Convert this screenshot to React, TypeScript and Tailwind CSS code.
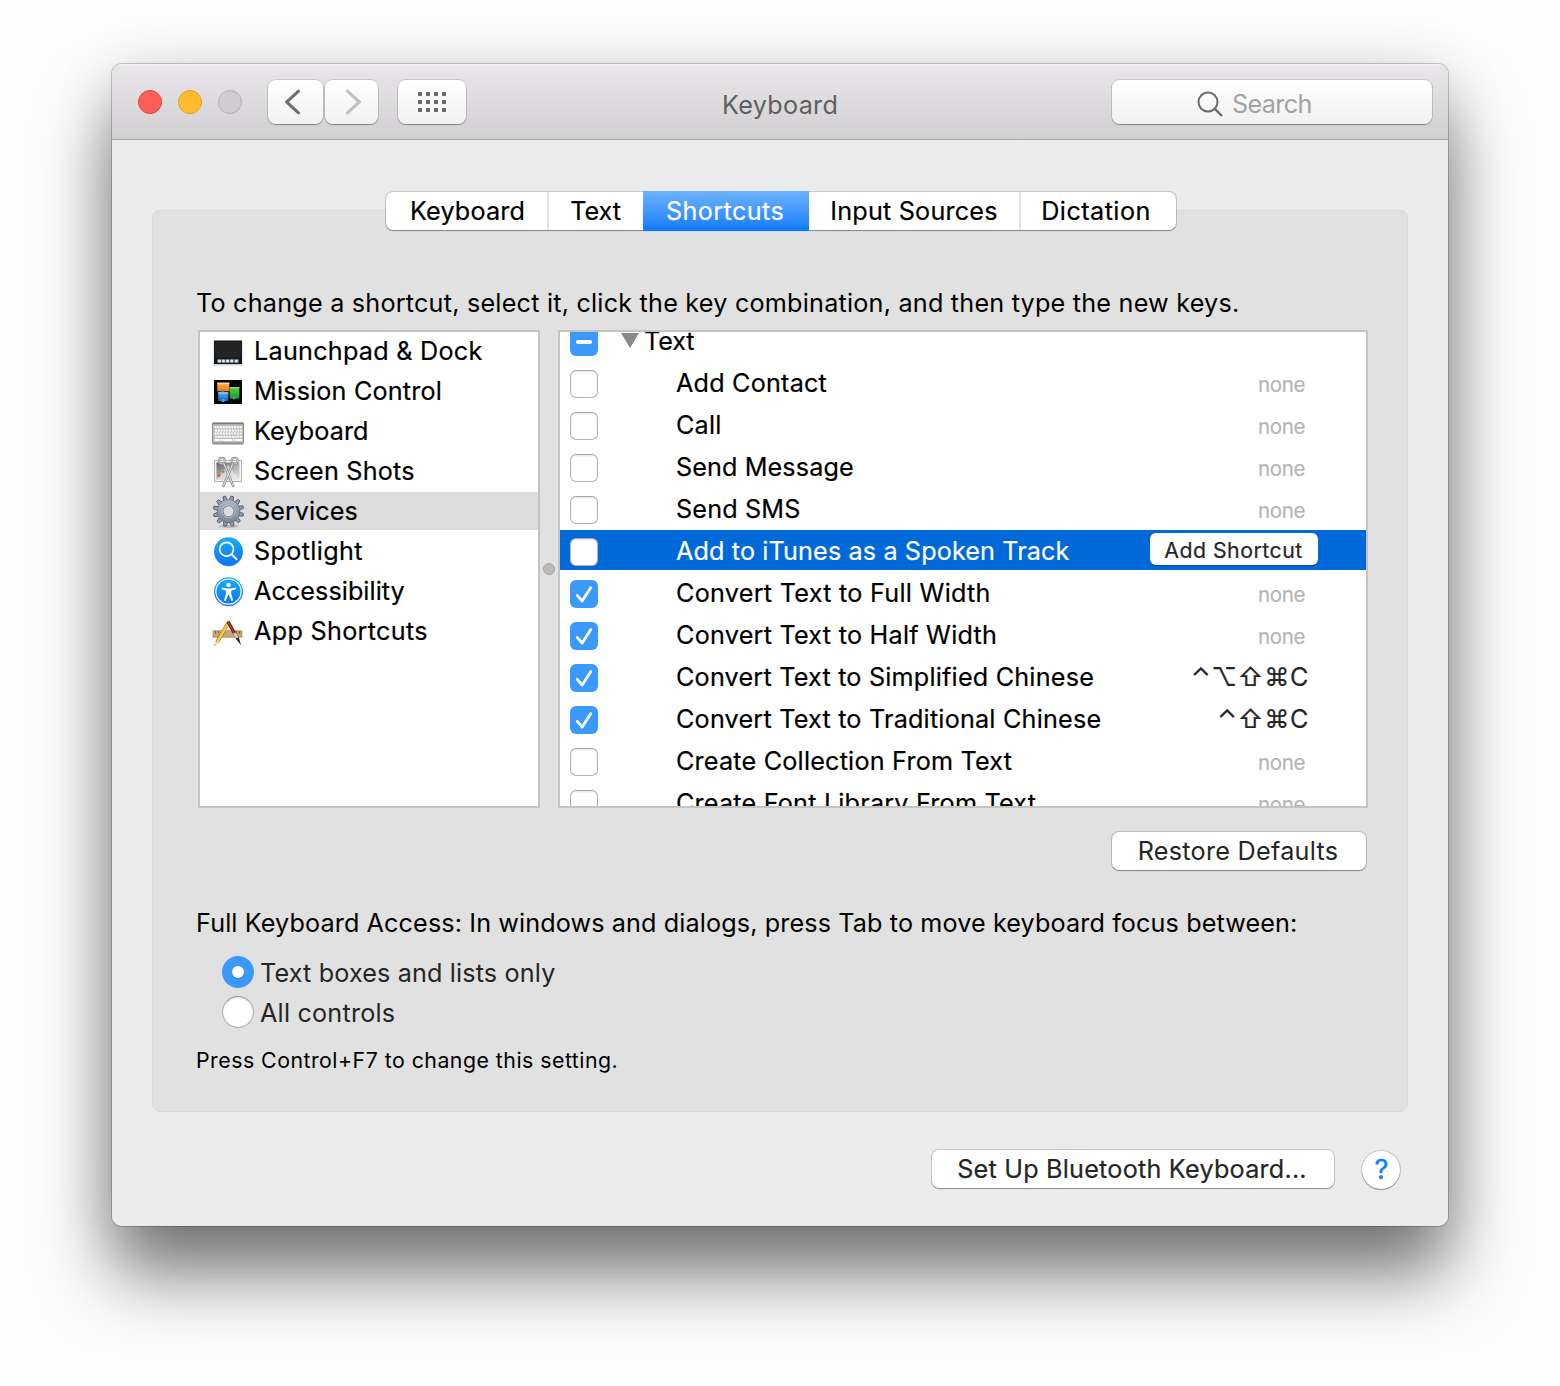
import { useState, type ReactNode } from "react";
import { clsx } from "clsx";

type CheckState = "on" | "off" | "mixed";

interface Service {
  name: string;
  state: CheckState;
  keys?: string;
  group?: boolean;
  tracking?: string;
}

const tabs = [
  { name: "Keyboard", className: "w-[161px] pl-0.5 tracking-[0.15px]" },
  { name: "Text", className: "w-[96px] pr-px tracking-[-0.05px]" },
  { name: "Shortcuts", className: "w-[166px] pr-0.5 tracking-[0.4px]" },
  { name: "Input Sources", className: "w-[210px] tracking-[0.2px]" },
  { name: "Dictation", className: "w-[157px] pr-[5px] tracking-[0.45px]" },
];

const services: Service[] = [
  { name: "Text", state: "mixed", group: true, tracking: "tracking-[-0.1px]" },
  { name: "Add Contact", state: "off" },
  { name: "Call", state: "off" },
  { name: "Send Message", state: "off", tracking: "tracking-[0.1px]" },
  { name: "Send SMS", state: "off", tracking: "tracking-[0.15px]" },
  { name: "Add to iTunes as a Spoken Track", state: "off", tracking: "tracking-[0.12px]" },
  { name: "Convert Text to Full Width", state: "on", tracking: "tracking-[0.27px]" },
  { name: "Convert Text to Half Width", state: "on", tracking: "tracking-[0.24px]" },
  { name: "Convert Text to Simplified Chinese", state: "on", keys: "⌃⌥⇧⌘C" },
  { name: "Convert Text to Traditional Chinese", state: "on", keys: "⌃⇧⌘C" },
  { name: "Create Collection From Text", state: "off" },
  { name: "Create Font Library From Text", state: "off" },
];

function IconFrame({ children }: { children: ReactNode }) {
  return (
    <svg width="36" height="38" viewBox="0 0 36 38" className="shrink-0">
      {children}
    </svg>
  );
}

function LaunchpadIcon() {
  return (
    <IconFrame>
      <rect x="3.5" y="10" width="29" height="23.5" fill="#aab2ba" opacity="0.6" />
      <rect x="4" y="8.5" width="28" height="23.5" fill="#15181b" />
      <rect x="5" y="10" width="26" height="15.5" fill="#242424" />
      <rect x="7" y="27" width="22" height="4" fill="#565e66" />
      {[9.4, 13.5, 17.6, 21.8, 26.3].map((cx) => (
        <circle key={cx} cx={cx} cy="29" r="1.6" fill="#e2eaf3" />
      ))}
    </IconFrame>
  );
}

function MissionControlIcon() {
  return (
    <IconFrame>
      <defs>
        <linearGradient id="mcOrange" x1="0" y1="0" x2="0" y2="1">
          <stop offset="0" stopColor="#ffb04a" />
          <stop offset="1" stopColor="#f07c08" />
        </linearGradient>
        <linearGradient id="mcBlue" x1="0" y1="0" x2="0" y2="1">
          <stop offset="0" stopColor="#5ab0f5" />
          <stop offset="1" stopColor="#0f62c8" />
        </linearGradient>
        <linearGradient id="mcGreen" x1="0" y1="0" x2="0" y2="1">
          <stop offset="0" stopColor="#56d04c" />
          <stop offset="1" stopColor="#1b9c1f" />
        </linearGradient>
      </defs>
      <rect x="4" y="8" width="28" height="24" fill="#060606" />
      <rect x="7.3" y="10.7" width="12" height="8.6" fill="url(#mcOrange)" />
      <rect x="7.3" y="10.7" width="12" height="1.5" fill="#f6d8ae" />
      <rect x="8.3" y="20.3" width="10" height="8.7" fill="url(#mcBlue)" />
      <rect x="8.3" y="20.3" width="10" height="1.3" fill="#a8cdec" />
      <rect x="19.7" y="15" width="9.6" height="11.5" fill="url(#mcGreen)" />
      <rect x="19.7" y="15" width="9.6" height="1.4" fill="#87dc80" />
      <circle cx="12.8" cy="18.8" r="1.3" fill="#3d9be8" />
      <circle cx="13.2" cy="28.4" r="1.7" fill="#38a5f5" />
      <circle cx="24.3" cy="26" r="1.4" fill="#3b9ee0" />
    </IconFrame>
  );
}

function KeyboardIcon() {
  return (
    <IconFrame>
      <rect x="2.5" y="12" width="31" height="20.5" rx="1" fill="#8d8d8d" />
      <rect x="2.5" y="11" width="31" height="20" rx="1" fill="#bdbdbd" stroke="#8f8f8f" />
      <rect x="2.5" y="10.7" width="31" height="1.5" fill="#777" />
      {[15.2, 18.4, 21.6, 24.8].map((y, i) => (
        <line key={y} x1={4.4 + (i % 2) * 0.6} x2="32" y1={y} y2={y} stroke="#fff" strokeWidth="2" strokeDasharray="2 0.8" />
      ))}
      <path d="M4.4 28h5M10.2 28h1.5M12.4 28h9.8M23 28h1.6M25.4 28H32" stroke="#fff" strokeWidth="2" />
    </IconFrame>
  );
}

function ScreenShotsIcon() {
  return (
    <IconFrame>
      <defs>
        <linearGradient id="shot" x1="0" y1="0" x2="1" y2="1">
          <stop offset="0" stopColor="#5e5e5e" />
          <stop offset="0.55" stopColor="#b5b5b5" />
          <stop offset="1" stopColor="#e4e4e4" />
        </linearGradient>
      </defs>
      <rect x="4.5" y="8.5" width="27" height="21" fill="#f4f4f4" stroke="#b4b4b4" />
      <rect x="6.5" y="10.5" width="23" height="17" fill="url(#shot)" />
      <path d="M6.5 27.5 18 13l11.5 14.5z" fill="#f0f0f0" opacity="0.6" />
      <path d="M8 24.5l2.4-2.2" stroke="#e0493b" strokeWidth="2" />
      <path d="M10.4 22.3l2-1.6" stroke="#efb94b" strokeWidth="1.8" />
      <path d="M12.4 20.7l2-1.6" stroke="#52a552" strokeWidth="1.6" />
      <g fill="none" strokeLinecap="round">
        <circle cx="12" cy="8.8" r="3" stroke="#8d8d8d" strokeWidth="2" />
        <circle cx="24.6" cy="8.8" r="3" stroke="#8d8d8d" strokeWidth="2" />
        <circle cx="12" cy="8.8" r="3" stroke="#d0d0d0" strokeWidth="0.9" />
        <circle cx="24.6" cy="8.8" r="3" stroke="#d0d0d0" strokeWidth="0.9" />
        <path d="M13.8 11.5 23.2 34M22.8 11.5 13.4 34" stroke="#858585" strokeWidth="2.5" />
        <path d="M13.8 11.5 23.2 34M22.8 11.5 13.4 34" stroke="#dcdcdc" strokeWidth="1.2" />
      </g>
    </IconFrame>
  );
}

function ServicesIcon() {
  return (
    <IconFrame>
      <defs>
        <linearGradient id="gear" gradientUnits="userSpaceOnUse" x1="0" y1="4" x2="0" y2="34">
          <stop offset="0" stopColor="#b4bdcb" />
          <stop offset="1" stopColor="#747f90" />
        </linearGradient>
      </defs>
      <ellipse cx="18.5" cy="34.3" rx="10" ry="1.4" fill="#8b8b8b" opacity="0.5" />
      {Array.from({ length: 12 }, (_, i) => (
        <path
          key={i}
          d="M16.2 9 17.3 3.9h2.4L20.8 9z"
          transform={`rotate(${i * 30 + 14} 18.5 19.2)`}
          fill="#929dae"
          stroke="#4d5665"
          strokeWidth="0.8"
        />
      ))}
      <circle cx="18.5" cy="19.2" r="8.3" fill="none" stroke="#4d5665" strokeWidth="6.2" />
      <circle cx="18.5" cy="19.2" r="8.4" fill="none" stroke="url(#gear)" strokeWidth="5.4" />
      <circle cx="18.5" cy="19.2" r="6.4" fill="none" stroke="#bcc4d0" strokeWidth="0.8" />
    </IconFrame>
  );
}

function BlueDisc() {
  return (
    <>
      <defs>
        <linearGradient id="disc" x1="0" y1="0" x2="0" y2="1">
          <stop offset="0" stopColor="#1badf8" />
          <stop offset="1" stopColor="#0a74f2" />
        </linearGradient>
      </defs>
      <circle cx="18.5" cy="20.3" r="14.5" fill="#000" opacity="0.18" />
      <circle cx="18.5" cy="19.6" r="14.4" fill="url(#disc)" />
    </>
  );
}

function SpotlightIcon() {
  return (
    <IconFrame>
      <BlueDisc />
      <circle cx="16.6" cy="17.3" r="6.9" fill="none" stroke="#fff" strokeWidth="1.7" />
      <path d="M21.6 22.3 26.6 27.2" stroke="#fff" strokeWidth="2" strokeLinecap="round" />
    </IconFrame>
  );
}

function AccessibilityIcon() {
  return (
    <IconFrame>
      <BlueDisc />
      <circle cx="18.5" cy="19.6" r="12.6" fill="none" stroke="#fff" strokeWidth="1.2" />
      <circle cx="18.5" cy="12.9" r="2.2" fill="#fff" />
      <path d="M11.6 15.4 16.8 16.4h3.8l5.2-1v1.9l-4.6 1.3v3.2l2 6.6-1.7.5-2.6-6.3h-.6l-2.6 6.3-1.7-.5 2-6.6v-3.2l-4.4-1.3z" fill="#fff" />
    </IconFrame>
  );
}

function AppShortcutsIcon() {
  return (
    <IconFrame>
      <rect x="3" y="18.8" width="29" height="6.4" fill="#c7a373" stroke="#a27e4e" strokeWidth="0.6" />
      <path d="M5.5 19v2.6M8.5 19v2M11.5 19v2.6M23.5 19v2.6M26.5 19v2M29.5 19v2.6" stroke="#6f5230" strokeWidth="0.8" />
      <path d="M18 11.2 7.2 30" stroke="#a86a12" strokeWidth="3.6" />
      <path d="M18 11.2 7.2 30" stroke="#f8bd3c" strokeWidth="2.6" />
      <path d="M18.7 11.2 7.9 30" stroke="#fbdc86" strokeWidth="0.8" />
      <path d="M5.6 28.8 8.8 30.8 4.3 33.8z" fill="#ead0a0" />
      <path d="M4.6 32.4 5.4 33 4.2 34z" fill="#222" />
      <path d="M17 9.6 19.8 11.2" stroke="#e8837c" strokeWidth="2.4" />
      <path d="M18 9.6 27.6 26.6" stroke="#5e1f12" strokeWidth="3.2" />
      <path d="M18 9.6 27.6 26.6" stroke="#a8402c" strokeWidth="1.5" />
      <path d="M24.4 21 27.2 26" stroke="#c9c9c9" strokeWidth="3" />
      <path d="M26 27 28.8 25.4 31.2 33.4z" fill="#2b2420" />
    </IconFrame>
  );
}

const categories = [
  { name: "Launchpad & Dock", icon: LaunchpadIcon, tracking: "tracking-[0.25px]" },
  { name: "Mission Control", icon: MissionControlIcon, tracking: "tracking-[0.16px]" },
  { name: "Keyboard", icon: KeyboardIcon, tracking: "tracking-[0.1px]" },
  { name: "Screen Shots", icon: ScreenShotsIcon },
  { name: "Services", icon: ServicesIcon, tracking: "tracking-[0.05px]" },
  { name: "Spotlight", icon: SpotlightIcon, tracking: "tracking-[0.35px]" },
  { name: "Accessibility", icon: AccessibilityIcon, tracking: "tracking-[0.05px]" },
  { name: "App Shortcuts", icon: AppShortcutsIcon, tracking: "tracking-[0.3px]" },
];

function Checkbox({ state, onClick }: { state: CheckState; onClick: () => void }) {
  return (
    <button
      onClick={onClick}
      className={clsx(
        "mt-2 flex size-7 shrink-0 items-center justify-center rounded-[6px]",
        state === "off"
          ? "border border-[#b4b4b4] border-t-[#a6a6a6] bg-white shadow-[inset_0_1px_2px_rgba(0,0,0,0.12)]"
          : "bg-[#3b99fc]"
      )}
    >
      {state === "on" && (
        <svg width="28" height="28" viewBox="0 0 28 28" fill="none" stroke="#fff" strokeWidth="2.8" strokeLinecap="round" strokeLinejoin="round">
          <path d="M7.2 15.4 12.2 21 20.8 7.6" />
        </svg>
      )}
      {state === "mixed" && <span className="h-[3.5px] w-4 rounded-full bg-white" />}
    </button>
  );
}

function Radio({ checked, label, className, onClick }: { checked: boolean; label: string; className: string; onClick: () => void }) {
  return (
    <button onClick={onClick} className={clsx("flex h-10 items-center gap-1.5 text-[#262626]", className)}>
      <span
        className={clsx(
          "-mt-0.5 flex size-8 items-center justify-center rounded-full",
          checked ? "bg-[#3b99fc]" : "border border-[#b0b0b0] border-t-[#979797] bg-white shadow-[inset_0_1px_2px_rgba(0,0,0,0.15)]"
        )}
      >
        {checked && <span className="size-3 rounded-full bg-white shadow-[0_1px_1px_rgba(0,0,0,0.2)]" />}
      </span>
      {label}
    </button>
  );
}

const toolbarButton =
  "flex h-11 items-center justify-center rounded-[8px] bg-linear-to-b from-white to-[#f1f1f1] shadow-[0_0_0_1px_rgba(0,0,0,0.12),0_1px_1px_rgba(0,0,0,0.3)]";
const pushButton =
  "rounded-[7px] bg-white text-[#262626] shadow-[0_0_0_1px_rgba(0,0,0,0.15),0_1px_1px_rgba(0,0,0,0.3)]";

function TitleBar() {
  return (
    <header className="flex h-[76px] items-center border-b border-[#a9a6a9] bg-linear-to-b from-[#e9e7e9] to-[#d1cfd1] pt-px pr-4 pl-[26px] shadow-[inset_0_2px_0_rgba(255,255,255,0.4)]">
      <div className="flex gap-4">
        <span className="size-6 rounded-full border border-[#e0443e] bg-[#ff5f57]" />
        <span className="size-6 rounded-full border border-[#dfa023] bg-[#ffbd2e]" />
        <span className="size-6 rounded-full border border-[#b3b1b3] bg-[#cfcdcf]" />
      </div>
      <div className="ml-[26px] flex gap-[2px]">
        <button className={clsx(toolbarButton, "w-[55px]")}>
          <svg width="16" height="26" viewBox="0 0 16 26" fill="none" stroke="#6e6e6e" strokeWidth="3" strokeLinecap="round" className="mr-1.5">
            <path d="M13.5 2.2 1.8 13l11.7 10.8" />
          </svg>
        </button>
        <button className={clsx(toolbarButton, "w-[53px]")}>
          <svg width="16" height="26" viewBox="0 0 16 26" fill="none" stroke="#bfbfbf" strokeWidth="3" strokeLinecap="round" className="ml-0.5">
            <path d="M2.5 2.2 14.2 13 2.5 23.8" />
          </svg>
        </button>
      </div>
      <button className={clsx(toolbarButton, "ml-5 w-[68px]")}>
        <span className="grid grid-cols-4 gap-1">
          {Array.from({ length: 12 }, (_, i) => (
            <span key={i} className="size-1 bg-[#6c6c6c]" />
          ))}
        </span>
      </button>
      <h1 className="ml-[256px] pt-[5px] tracking-[0.3px] text-[#5f5f5f]">Keyboard</h1>
      <div className={clsx(toolbarButton, "ml-auto w-80 gap-[9px] pr-[37px] text-[#a2a2a2]")}>
        <svg width="26" height="26" viewBox="0 0 26 26" fill="none" stroke="#6b6b6b" strokeWidth="2" className="mt-1">
          <circle cx="11" cy="11" r="9.5" />
          <path d="M17.8 17.8 25 25" strokeWidth="2.4" />
        </svg>
        <span className="w-[78px] pt-1 tracking-[-0.63px]">Search</span>
      </div>
    </header>
  );
}

export default function App() {
  const [tab, setTab] = useState("Shortcuts");
  const [category, setCategory] = useState("Services");
  const [selected, setSelected] = useState("Add to iTunes as a Spoken Track");
  const [items, setItems] = useState(services);
  const [allControls, setAllControls] = useState(false);

  const toggle = (name: string) =>
    setItems(items.map((s) => (s.name === name ? { ...s, state: s.state === "on" ? "off" : "on" } : s)));

  return (
    <div className="flex h-[1386px] w-[1560px] justify-center bg-[#fdfdfd] pt-16 font-['Inter',sans-serif] text-[25.2px] leading-[30px] tracking-[0.2px] whitespace-nowrap text-black">
      <div className="h-[1162px] w-[1336px] rounded-[10px] shadow-[0_0_0_1px_rgba(0,0,0,0.2),0_0_60px_rgba(0,0,0,0.1),0_48px_72px_rgba(0,0,0,0.53)]">
        <div className="flex h-full flex-col overflow-hidden rounded-[10px] bg-[#ebebeb]">
          <TitleBar />

          <nav className="relative z-10 mt-[52px] ml-[274px] flex h-[38px] shrink-0 self-start rounded-[7px] bg-white shadow-[0_0_0_1px_rgba(0,0,0,0.15),0_1px_1px_rgba(0,0,0,0.3)] [-webkit-text-stroke:0.2px]">
            {tabs.map((t, i) => (
              <button
                key={t.name}
                onClick={() => setTab(t.name)}
                className={clsx(
                  "flex items-center justify-center",
                  t.className,
                  t.name === tab
                    ? "-my-px bg-linear-to-b from-[#6cb3fa] to-[#067aff] text-white"
                    : (i === 1 || i === 4) && "border-l-2 border-[#e3e3e3]"
                )}
              >
                {t.name}
              </button>
            ))}
          </nav>

          <main className="-mt-5 ml-10 flex h-[902px] w-[1256px] shrink-0 flex-col rounded-[8px] border border-[#d8d8d8] bg-[#e1e1e1] pr-[39px] pl-[43px]">
            <p className="mt-[77px] tracking-[0.213px]">
              To change a shortcut, select it, click the key combination, and then type the new keys.
            </p>

            <div className="mt-3 ml-0.5 flex h-[478px] shrink-0 [-webkit-text-stroke:0.2px]">
              <ul className="flex w-[342px] flex-col gap-0.5 border-2 border-[#c4c4c4] bg-white">
                {categories.map(({ name, icon: Icon, tracking }) => (
                  <li
                    key={name}
                    onClick={() => setCategory(name)}
                    className={clsx("flex h-[38px] items-center gap-2 pl-2.5", name === category && "bg-[#dcdcdc]")}
                  >
                    <Icon />
                    <span className={tracking}>{name}</span>
                  </li>
                ))}
              </ul>

              <div className="flex w-[18px] items-center justify-center">
                <span className="size-3 rounded-full border border-[#a3a3a3] bg-[#bababa]" />
              </div>

              <div className="w-[810px] overflow-hidden border-2 border-[#c4c4c4] bg-white">
                <ul className="-mt-3 flex flex-col gap-0.5">
                  {items.map((s) => {
                    const active = s.name === selected;
                    return (
                      <li
                        key={s.name}
                        onClick={() => setSelected(s.name)}
                        className={clsx("flex h-10 pr-[61px] pl-2.5", active && "bg-[#0069d9] text-white")}
                      >
                        <Checkbox state={s.state} onClick={() => toggle(s.name)} />
                        {s.group && (
                          <svg width="18" height="15" viewBox="0 0 18 15" className="mt-[13px] ml-[23px]">
                            <path d="M0 0h18L9 15z" fill="#8a8a8a" />
                          </svg>
                        )}
                        <span className={clsx("pt-[6px]", s.group ? "ml-[5px]" : "ml-[78px]", s.tracking)}>{s.name}</span>
                        {active ? (
                          <button className="mt-[3px] -mr-[13px] ml-auto h-8 w-[168px] rounded-[6px] bg-white pt-px pr-px text-[21.3px] tracking-[0.48px] text-[#262626] shadow-[0_1px_1px_rgba(0,0,0,0.3)]">
                            Add Shortcut
                          </button>
                        ) : s.keys ? (
                          <span className="-mr-1 ml-auto pt-[6px] tracking-[0.6px] text-[#262626]">{s.keys}</span>
                        ) : (
                          !s.group && (
                            <span className="ml-auto pt-[8px] text-[20.5px] tracking-[-0.35px] text-[#b5b5b5]">none</span>
                          )
                        )}
                      </li>
                    );
                  })}
                </ul>
              </div>
            </div>

            <button className={clsx(pushButton, "mt-6 mr-0.5 h-[38px] w-[254px] shrink-0 self-end pr-0.5 tracking-[0.26px]")}>
              Restore Defaults
            </button>

            <p className="mt-[38px] tracking-[0.11px]">
              Full Keyboard Access: In windows and dialogs, press Tab to move keyboard focus between:
            </p>
            <div className="mt-[15px] ml-[26px] flex flex-col items-start">
              <Radio checked={!allControls} onClick={() => setAllControls(false)} label="Text boxes and lists only" className="tracking-[0.14px]" />
              <Radio checked={allControls} onClick={() => setAllControls(true)} label="All controls" className="tracking-[0.2px]" />
            </div>
            <p className="mt-3 text-[21.3px] tracking-[0.49px]">Press Control+F7 to change this setting.</p>
          </main>

          <footer className="mt-[37px] mr-12 flex items-center justify-end gap-7">
            <button className={clsx(pushButton, "h-[38px] w-[402px] pr-0.5 tracking-[0.22px] [-webkit-text-stroke:0.2px]")}>
              Set Up Bluetooth Keyboard...
            </button>
            <button className="mt-0.5 size-[38px] rounded-full bg-white pl-px text-[27px] text-[#0a80ff] shadow-[0_0_0_1px_rgba(0,0,0,0.15),0_1px_1px_rgba(0,0,0,0.3)] [-webkit-text-stroke:0.4px]">
              ?
            </button>
          </footer>
        </div>
      </div>
    </div>
  );
}
